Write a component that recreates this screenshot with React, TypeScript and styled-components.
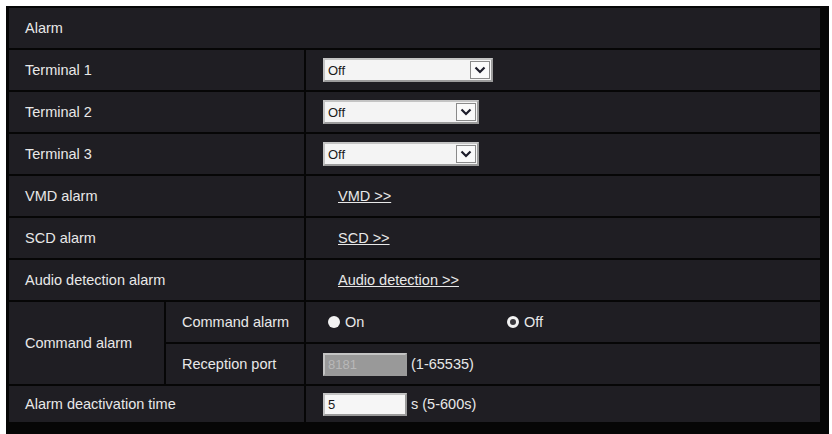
import React from "react"
import styled, { createGlobalStyle } from "styled-components"

const GlobalStyle = createGlobalStyle`
  html, body {
    margin: 0;
    padding: 0;
    background: #ffffff;
    font-family: "Liberation Sans", Arial, sans-serif;
  }
`

const Page = styled.div`
  padding: 6px 3px 0 6px;
  height: 434px;
  box-sizing: border-box;
  overflow: hidden;
`

const Panel = styled.div`
  background: #060606;
  padding: 2px 9px 12px 3px;
  display: grid;
  grid-template-columns: 155px 138px 1fr;
  grid-template-rows: repeat(9, 40px) 36px;
  gap: 2px;
  height: 100%;
  box-sizing: border-box;
`

const Cell = styled.div<{ $span?: number; $rows?: number }>`
  background: #1f1e23;
  color: #e8e8e8;
  font-size: 14.5px;
  display: flex;
  align-items: center;
  grid-column: span ${(p) => p.$span ?? 1};
  grid-row: span ${(p) => p.$rows ?? 1};
`

const Label = styled(Cell)`
  padding-left: 16px;
`

const SubLabel = styled(Cell)`
  padding-left: 16px;
`

const Value = styled(Cell)<{ $indent?: number }>`
  padding-left: ${(p) => p.$indent ?? 17}px;
  gap: 4px;
`

const Header = styled(Cell)`
  grid-column: 1 / -1;
  padding-left: 16px;
`

const SelectBox = styled.div<{ $width: number }>`
  width: ${(p) => p.$width}px;
  height: 24px;
  box-sizing: border-box;
  background: #f4f4f4;
  border: 2px solid #c4c4c4;
  border-right-color: #9c9c9c;
  border-bottom-color: #9c9c9c;
  display: flex;
  align-items: center;
  justify-content: space-between;
  color: #1a1a1a;
  font-size: 13px;
  padding-left: 3px;
`

const Arrow = styled.div`
  width: 20px;
  height: 18px;
  margin-right: 1px;
  box-sizing: border-box;
  border: 1px solid #8a8a8a;
  background: #fafafa;
  display: flex;
  align-items: center;
  justify-content: center;
`

const Link = styled.a`
  color: #e8e8e8;
  text-decoration: underline;
  font-size: 14.5px;
`

const RadioGroup = styled.div`
  display: flex;
  align-items: center;
  width: 175px;
  gap: 5px;
`

const RadioDot = styled.span<{ $checked?: boolean }>`
  width: 12px;
  height: 12px;
  border-radius: 50%;
  background: #f2f2f2;
  box-sizing: border-box;
  border: ${(p) => (p.$checked ? "3px solid #f2f2f2" : "none")};
  ${(p) => (p.$checked ? "background: #3a393e;" : "")}
`

const TextBox = styled.div<{ $disabled?: boolean }>`
  width: 84px;
  height: 23px;
  box-sizing: border-box;
  border: 2px solid #c4c4c4;
  border-right-color: #9a9a9a;
  border-bottom-color: #9a9a9a;
  background: ${(p) => (p.$disabled ? "#999999" : "#f6f6f6")};
  color: ${(p) => (p.$disabled ? "#b8b8b8" : "#1a1a1a")};
  font-size: 13px;
  display: flex;
  align-items: center;
  padding-left: 3px;
`

const Hint = styled.span`
  font-size: 14.5px;
  color: #e8e8e8;
`

const Chevron = () => (
  <svg width="12" height="8" viewBox="0 0 12 8">
    <path d="M1.5 1.5 L6 6 L10.5 1.5" fill="none" stroke="#1c1c2a" strokeWidth="2.2" />
  </svg>
)

const Select = ({ width }: { width: number }) => (
  <SelectBox $width={width}>
    <span>Off</span>
    <Arrow>
      <Chevron />
    </Arrow>
  </SelectBox>
)

const terminals = [
  { name: "Terminal 1", width: 170 },
  { name: "Terminal 2", width: 156 },
  { name: "Terminal 3", width: 156 },
]

const links = [
  { name: "VMD alarm", text: "VMD >>" },
  { name: "SCD alarm", text: "SCD >>" },
  { name: "Audio detection alarm", text: "Audio detection >>" },
]

export default function App() {
  return (
    <>
      <GlobalStyle />
      <Page>
        <Panel>
          <Header>Alarm</Header>

          {terminals.map((t) => (
            <React.Fragment key={t.name}>
              <Label $span={2}>{t.name}</Label>
              <Value>
                <Select width={t.width} />
              </Value>
            </React.Fragment>
          ))}

          {links.map((l) => (
            <React.Fragment key={l.name}>
              <Label $span={2}>{l.name}</Label>
              <Value $indent={32}>
                <Link>{l.text}</Link>
              </Value>
            </React.Fragment>
          ))}

          <Label $rows={2}>Command alarm</Label>
          <SubLabel>Command alarm</SubLabel>
          <Value $indent={22}>
            <RadioGroup>
              <RadioDot />
              <span>On</span>
            </RadioGroup>
            <RadioGroup>
              <RadioDot $checked />
              <span>Off</span>
            </RadioGroup>
          </Value>
          <SubLabel>Reception port</SubLabel>
          <Value>
            <TextBox $disabled>8181</TextBox>
            <Hint>(1-65535)</Hint>
          </Value>

          <Label $span={2}>Alarm deactivation time</Label>
          <Value>
            <TextBox>5</TextBox>
            <Hint>s (5-600s)</Hint>
          </Value>
        </Panel>
      </Page>
    </>
  )
}
